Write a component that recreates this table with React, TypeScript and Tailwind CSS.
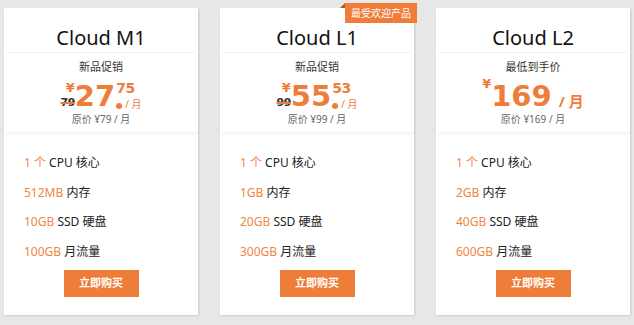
import React from "react";

type Plan = {
  name: string;
  tag: string;
  int: string;
  dec?: string;
  old?: string;
  orig: string;
  specs: [string, string][];
  hot?: boolean;
};

const plans: Plan[] = [
  {
    name: "Cloud M1",
    tag: "新品促销",
    int: "27",
    dec: "75",
    old: "79",
    orig: "原价 ¥79 / 月",
    specs: [["1 个", "CPU 核心"], ["512MB", "内存"], ["10GB", "SSD 硬盘"], ["100GB", "月流量"]],
  },
  {
    name: "Cloud L1",
    tag: "新品促销",
    int: "55",
    dec: "53",
    old: "99",
    orig: "原价 ¥99 / 月",
    specs: [["1 个", "CPU 核心"], ["1GB", "内存"], ["20GB", "SSD 硬盘"], ["300GB", "月流量"]],
    hot: true,
  },
  {
    name: "Cloud L2",
    tag: "最低到手价",
    int: "169",
    orig: "原价 ¥169 / 月",
    specs: [["1 个", "CPU 核心"], ["2GB", "内存"], ["40GB", "SSD 硬盘"], ["600GB", "月流量"]],
  },
];

const cjk = "font-['Noto_Sans','Noto_Sans_CJK_SC',sans-serif]";
const num = "font-['DejaVu_Sans','Noto_Sans_CJK_SC',sans-serif]";

function Price({ p }: { p: Plan }) {
  if (!p.dec) {
    return (
      <div className="flex items-end justify-center h-[36px] text-[#ef7d3a]">
        <span className={`${num} font-bold text-[13px] leading-none self-start mt-[2px]`}>¥</span>
        <span className={`${num} font-bold text-[29px] leading-none`}>{p.int}</span>
        <span className={`${cjk} font-bold text-[15px] leading-none ml-[7px] mb-[2px]`}>/ 月</span>
      </div>
    );
  }
  return (
    <div className="flex items-end justify-center h-[36px] text-[#ef7d3a]">
      <div className="flex flex-col items-end">
        <span className={`${num} font-bold text-[13px] leading-none mb-[3px]`}>¥</span>
        <span className={`${num} font-bold text-[11px] leading-none text-[#333] line-through decoration-[#ef7d3a] decoration-[1.5px] tracking-[-0.5px] mb-[3px]`}>
          {p.old}
        </span>
      </div>
      <span className={`${num} font-bold text-[29px] leading-none`}>{p.int}</span>
      <div className="flex flex-col items-start ml-[1px] h-[30px]">
        <span className={`${num} font-bold text-[14px] leading-[14px] tracking-[-0.3px]`}>{p.dec}</span>
        <div className="flex items-end mt-auto mb-[2px]">
          <span className="w-[6px] h-[6px] rounded-full bg-[#ef7d3a]" />
          <span className={`${cjk} text-[10px] leading-[10px] ml-[3px]`}>/ 月</span>
        </div>
      </div>
    </div>
  );
}

function Card({ p }: { p: Plan }) {
  return (
    <div className="relative w-[194px] h-[307px] bg-white shadow-[1px_1px_2px_rgba(0,0,0,0.12)] flex flex-col">
      {p.hot && (
        <div className="absolute top-[-5px] right-[-3px] flex">
          <span className="w-0 h-0 border-l-[5px] border-l-transparent border-b-[5px] border-b-[#b5561f]" />
          <span className={`${cjk} bg-[#ef7d3a] text-white text-[10px] leading-[20px] h-[20px] px-[6px]`}>最受欢迎产品</span>
        </div>
      )}
      <div className="shadow-[0_2px_3px_rgba(0,0,0,0.03)] pb-[6px] border-b border-[#f4f4f4]">
        <div className="mx-[3px] border-b border-[#f0f0f0] pt-[18px] h-[45px]">
          <div className="text-center text-[20px] leading-[24px] text-[#111] font-['Noto_Sans',sans-serif]">{p.name}</div>
        </div>
        <div className={`${cjk} text-center text-[11px] leading-[16px] text-[#333] mt-[6px]`}>{p.tag}</div>
        <Price p={p} />
        <div className={`${cjk} text-center text-[10px] leading-[14px] text-[#666] mt-[1px]`}>{p.orig}</div>
      </div>
      <div className={`${cjk} flex flex-col pl-[20px] pt-[22px] text-[12px] text-[#222]`}>
        {p.specs.map(([a, b]) => (
          <div key={a + b} className="h-[29.5px] leading-[16px]">
            <span className="text-[#f08546]">{a}</span> {b}
          </div>
        ))}
      </div>
      <div className="flex justify-center mt-[-3px]">
        <button className={`${cjk} w-[75px] h-[27px] bg-[#ef7d3a] text-white text-[11px] font-bold`}>立即购买</button>
      </div>
    </div>
  );
}

export default function App() {
  return (
    <div className="w-[634px] h-[325px] bg-[#e7e7e7] flex gap-[22px] px-[4px] pt-[8px]">
      {plans.map((p) => (
        <Card key={p.name} p={p} />
      ))}
    </div>
  );
}
